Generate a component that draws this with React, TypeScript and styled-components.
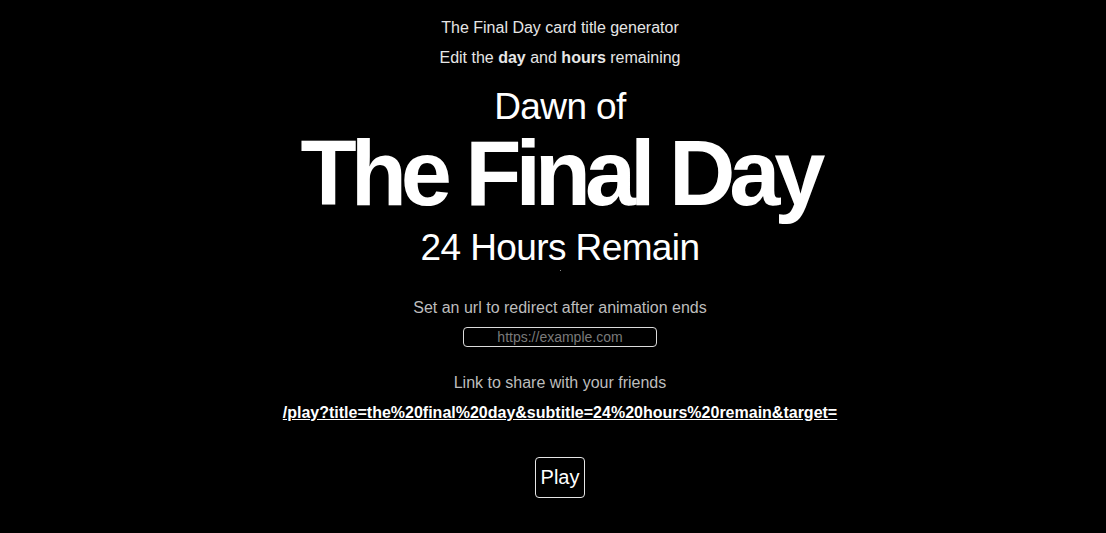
import React from "react";
import styled, { createGlobalStyle } from "styled-components";

const Global = createGlobalStyle`
  html, body { margin: 0; padding: 0; background: #000; }
  body { font-family: "Liberation Sans", Arial, sans-serif; color: #fff; }
`;

const Page = styled.main`
  display: flex;
  flex-direction: column;
  align-items: center;
  padding: 18px 0 0 14px;
  min-height: 533px;
  box-sizing: border-box;
  background: #000;
`;

const Intro = styled.p<{ $gap?: number }>`
  margin: 0 0 ${(p) => p.$gap ?? 0}px;
  font-size: 16px;
  line-height: 20px;
  color: #e6e6e6;
  text-align: center;
`;

const Card = styled.section`
  display: flex;
  flex-direction: column;
  align-items: center;
  margin-top: 19px;
`;

const Small = styled.div`
  font-size: 37px;
  line-height: 40px;
  letter-spacing: -0.6px;
  color: #fff;
`;

const Big = styled.h1`
  margin: 6px 0 15px;
  font-size: 92px;
  line-height: 80px;
  font-weight: 700;
  letter-spacing: -6.1px;
  color: #fff;
`;

const Caret = styled.span`
  display: block;
  width: 1px;
  height: 1px;
  margin: 2px 0 0;
  background: #888;
`;

const Label = styled.p<{ $top: number }>`
  margin: ${(p) => p.$top}px 0 0;
  font-size: 16px;
  line-height: 20px;
  color: #bdbdbd;
  text-align: center;
`;

const UrlInput = styled.input`
  margin-top: 9px;
  width: 194px;
  height: 20px;
  box-sizing: border-box;
  padding: 1px 2px;
  border: 1px solid #dcdcdc;
  border-radius: 4px;
  background: #000;
  color: #fff;
  font-family: "Liberation Sans", Arial, sans-serif;
  font-size: 14px;
  text-align: center;
  outline: none;
  &::placeholder { color: #7a7a7a; }
`;

const ShareLink = styled.a`
  margin-top: 10px;
  font-size: 16px;
  line-height: 20px;
  font-weight: 700;
  color: #fff;
  text-decoration: underline;
`;

const PlayButton = styled.button`
  margin-top: 34px;
  width: 50px;
  height: 41px;
  box-sizing: border-box;
  padding: 0;
  border: 1px solid #e6e6e6;
  border-radius: 4px;
  background: #000;
  color: #fff;
  font-family: "Liberation Sans", Arial, sans-serif;
  font-size: 20px;
  cursor: pointer;
`;

export default function App() {
  return (
    <>
      <Global />
      <Page>
        <Intro $gap={10}>The Final Day card title generator</Intro>
        <Intro>
          Edit the <b>day</b> and <b>hours</b> remaining
        </Intro>
        <Card>
          <Small>Dawn of</Small>
          <Big>The Final Day</Big>
          <Small>24 Hours Remain</Small>
          <Caret />
        </Card>
        <Label $top={27}>Set an url to redirect after animation ends</Label>
        <UrlInput placeholder="https://example.com" />
        <Label $top={26}>Link to share with your friends</Label>
        <ShareLink href="#">
          /play?title=the%20final%20day&amp;subtitle=24%20hours%20remain&amp;target=
        </ShareLink>
        <PlayButton>Play</PlayButton>
      </Page>
    </>
  );
}
